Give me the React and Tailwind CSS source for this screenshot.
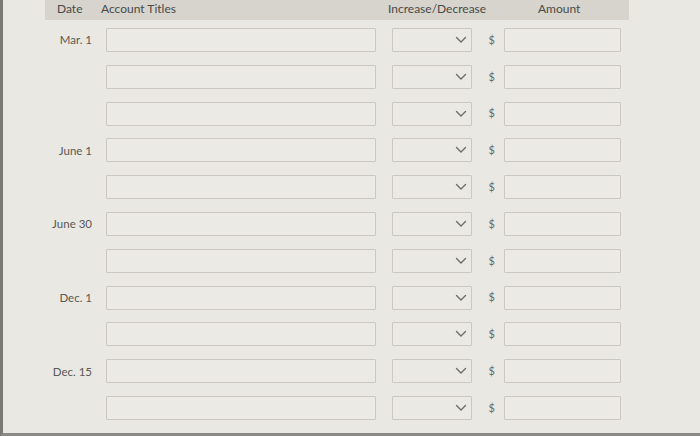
const rows = [
  { date: "Mar. 1" },
  { date: "" },
  { date: "" },
  { date: "June 1" },
  { date: "" },
  { date: "June 30" },
  { date: "" },
  { date: "Dec. 1" },
  { date: "" },
  { date: "Dec. 15" },
  { date: "" },
];

function Chevron() {
  return (
    <svg width="12" height="8" viewBox="0 0 12 8" fill="none">
      <path d="M1.5 1.5 L6 6 L10.5 1.5" stroke="#6f6e6a" strokeWidth="1.4" strokeLinecap="round" />
    </svg>
  );
}

export default function App() {
  return (
    <div
      className="w-[700px] h-[436px] bg-[#e9e8e2] text-[#555] border-l-[3px] border-l-[#7a7975] border-b-[3px] border-b-[#8a8985] overflow-hidden"
      style={{ fontFamily: "Lato, 'Open Sans', sans-serif" }}
    >
      {/* Header */}
      <div className="ml-[42px] w-[584px] h-[20px] bg-[#d6d4cc] flex items-center pb-[3px] text-[12px] text-[#4a4a48]">
        <div className="w-[56px] pl-[12px]">Date</div>
        <div className="w-[287px]">Account Titles</div>
        <div className="w-[150px]">Increase/Decrease</div>
        <div>Amount</div>
      </div>

      {/* Rows */}
      <div className="flex flex-col gap-[12.8px] mt-[8px]">
        {rows.map((r, i) => (
          <div key={i} className="flex items-center h-[24px]">
            <div className="w-[89px] text-right text-[11.5px] text-[#5a5955]">{r.date}</div>
            <div className="w-[14px]" />
            <div className="w-[270px] h-[24px] border border-[#cac8c0] bg-[#ebeae5] rounded-[1px]" />
            <div className="w-[16px]" />
            <div className="w-[80px] h-[24px] border border-[#cac8c0] bg-[#eae9e4] rounded-[1px] flex items-center justify-end pr-[4px]">
              <Chevron />
            </div>
            <div className="w-[32px] text-right pr-[9px] text-[11px] text-[#6a6965]">$</div>
            <div className="w-[117px] h-[24px] border border-[#cac8c0] bg-[#ebeae5] rounded-[1px]" />
          </div>
        ))}
      </div>
    </div>
  );
}
